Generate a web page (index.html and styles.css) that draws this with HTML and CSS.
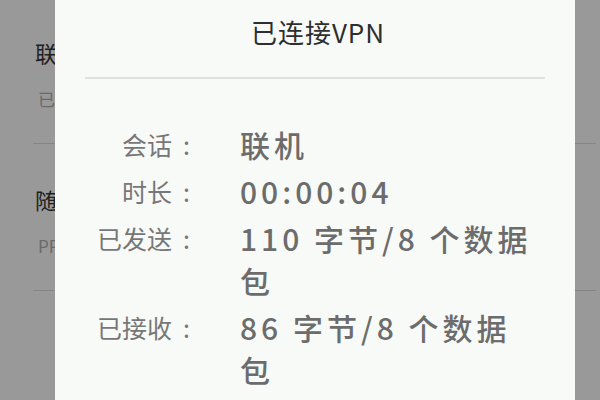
FILE: index.html
```html
<!DOCTYPE html>
<html lang="zh-CN">
<head>
<meta charset="utf-8">
<title>已连接VPN</title>
<link rel="stylesheet" href="styles.css">
</head>
<body>
<div class="screen">
  <ul class="vpn-list">
    <li class="vpn-item">
      <div class="vpn-name">联机</div>
      <div class="vpn-status">已连接</div>
    </li>
    <li class="vpn-item">
      <div class="vpn-name">随便</div>
      <div class="vpn-status">PPTP VPN</div>
    </li>
  </ul>
  <div class="dialog">
    <div class="dialog-title">已连接VPN</div>
    <div class="dialog-body">
      <div class="info-label">会话<span class="colon">:</span></div>
      <div class="info-value">联机</div>
      <div class="info-label">时长<span class="colon">:</span></div>
      <div class="info-value">00:00:04</div>
      <div class="info-label">已发送<span class="colon">:</span></div>
      <div class="info-value">110 字节/8 个数据包</div>
      <div class="info-label">已接收<span class="colon">:</span></div>
      <div class="info-value">86 字节/8 个数据包</div>
    </div>
  </div>
</div>
</body>
</html>
```

FILE: styles.css
```css
html, body {
  margin: 0;
  padding: 0;
}
body {
  width: 600px;
  height: 400px;
  overflow: hidden;
  background: #999999;
  font-family: "Noto Sans CJK SC", "Noto Sans", sans-serif;
}
.screen {
  position: relative;
  width: 600px;
  height: 400px;
  overflow: hidden;
}
.vpn-list {
  list-style: none;
  margin: -3px 0 0 0;
  padding: 0 4px 0 33px;
}
.vpn-item {
  padding: 40px 0 32px 2px;
  border-bottom: 1px solid #858585;
}
.vpn-name {
  font-size: 22px;
  line-height: 30px;
  color: #1e1e1e;
}
.vpn-status {
  margin-top: 20px;
  font-size: 17px;
  line-height: 24px;
  color: #6a6a6a;
  padding-left: 3px;
}
.dialog {
  position: absolute;
  left: 55px;
  top: 0;
  width: 520px;
  height: 400px;
  background: #f7faf7;
}
.dialog-title {
  margin: 0 30px;
  height: 79px;
  padding-top: 12px;
  box-sizing: border-box;
  border-bottom: 2px solid #dfe2df;
  text-align: center;
  font-size: 26px;
  line-height: 40px;
  letter-spacing: 1px;
  color: #2e2e2e;
  padding-left: 6px;
}
.dialog-body {
  display: grid;
  grid-template-columns: 142px 302px;
  column-gap: 43px;
  row-gap: 5px;
  padding-top: 44px;
}
.info-label {
  display: flex;
  justify-content: flex-end;
  font-size: 25px;
  line-height: 42px;
  color: #777777;
}
.colon {
  display: inline-block;
  width: 25px;
  padding-left: 4px;
  box-sizing: border-box;
  text-align: center;
}
.info-value {
  font-size: 30px;
  line-height: 42px;
  letter-spacing: 4px;
  font-weight: 500;
  color: #6c6c6c;
}
```
